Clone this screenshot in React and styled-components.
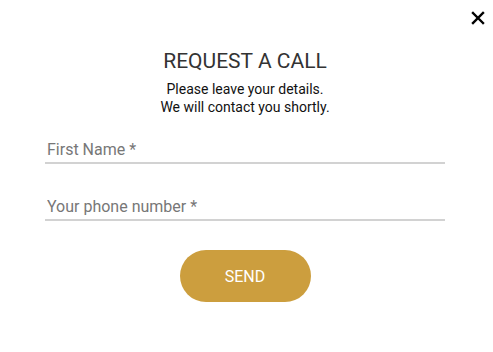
import React from "react";
import styled, { createGlobalStyle } from "styled-components";

const Global = createGlobalStyle`
  html, body { margin: 0; padding: 0; background: #fff; }
  body { font-family: Roboto, "Liberation Sans", sans-serif; }
  * { box-sizing: border-box; }
`;

const Modal = styled.div`
  position: relative;
  width: 493px;
  height: 352px;
  background: #fff;
  padding: 49px 48px 0 45px;
  display: flex;
  flex-direction: column;
  align-items: center;
`;

const Close = styled.button`
  position: absolute;
  top: 11px;
  right: 8px;
  width: 14px;
  height: 14px;
  padding: 0;
  border: 0;
  background: none;
  cursor: pointer;
  display: flex;
`;

const Title = styled.h2`
  margin: 0;
  font-family: Roboto, "Liberation Sans", sans-serif;
  font-weight: 400;
  font-size: 21px;
  line-height: 25px;
  color: #333;
`;

const Subtitle = styled.p`
  margin: 6px 0 0;
  font-size: 14px;
  line-height: 18px;
  color: #111;
  text-align: center;
`;

const Form = styled.form`
  width: 100%;
  margin-top: 24px;
  display: flex;
  flex-direction: column;
  align-items: center;
  gap: 33px;
`;

const Field = styled.input`
  width: 100%;
  height: 24px;
  padding: 0 2px 3px;
  border: 0;
  border-bottom: 2px solid #d2d2d2;
  outline: none;
  font-family: Roboto, "Liberation Sans", sans-serif;
  font-size: 16px;
  color: #333;
  background: transparent;
  &::placeholder { color: #777; opacity: 1; }
`;

const Send = styled.button`
  margin-top: -4px;
  width: 131px;
  height: 52px;
  border: 0;
  border-radius: 26px;
  background: #cc9e3e;
  color: #fff;
  font-family: Roboto, "Liberation Sans", sans-serif;
  font-size: 16px;
  font-weight: 400;
  cursor: pointer;
`;

export default function App() {
  return (
    <>
      <Global />
      <Modal>
        <Close aria-label="Close">
          <svg width="14" height="14" viewBox="0 0 14 14">
            <path d="M2 2 L12 12 M12 2 L2 12" stroke="#000" strokeWidth="2.4" strokeLinecap="square" />
          </svg>
        </Close>
        <Title>REQUEST A CALL</Title>
        <Subtitle>
          Please leave your details.
          <br />
          We will contact you shortly.
        </Subtitle>
        <Form onSubmit={(e) => e.preventDefault()}>
          <Field placeholder="First Name *" />
          <Field placeholder="Your phone number *" />
          <Send type="submit">SEND</Send>
        </Form>
      </Modal>
    </>
  );
}
